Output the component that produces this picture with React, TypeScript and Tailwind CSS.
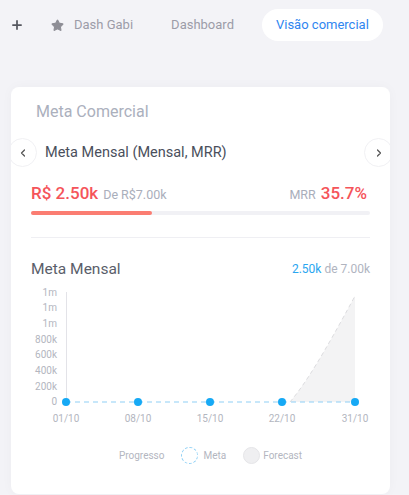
import { Plus, Star, ChevronLeft, ChevronRight } from "lucide-react";

const yLabels = ["1m", "1m", "1m", "800k", "600k", "400k", "200k", "0"];
const points = [
  { x: 35, label: "01/10" },
  { x: 107, label: "08/10" },
  { x: 179, label: "15/10" },
  { x: 251, label: "22/10" },
  { x: 324, label: "31/10" },
];

function Chart() {
  const base = 119;
  return (
    <svg width="339" height="145" viewBox="0 0 339 145" className="block">
      {yLabels.map((l, i) => (
        <text
          key={i}
          x="26"
          y={9 + i * 15.7 + 3.5}
          textAnchor="end"
          fontSize="10"
          fill="#b3b6c0"
          fontFamily="Roboto, sans-serif"
        >
          {l}
        </text>
      ))}
      <line x1="35.5" y1="9" x2="35.5" y2={base} stroke="#e3e3e8" strokeWidth="1" />
      <path
        d={`M259 ${base} C 275 100, 292 72, 324 13 L 324 ${base} Z`}
        fill="#f3f3f4"
      />
      <path
        d={`M259 ${base} C 275 100, 292 72, 324 13`}
        fill="none"
        stroke="#dcdcdf"
        strokeWidth="1"
        strokeDasharray="4 3"
      />
      <line
        x1="35"
        y1={base}
        x2="324"
        y2={base}
        stroke="#8fd0f5"
        strokeWidth="1.2"
        strokeDasharray="5 4"
      />
      {points.map((p) => (
        <g key={p.label}>
          <circle cx={p.x} cy={base} r="4" fill="#16a9f5" />
          <text
            x={p.x}
            y="139"
            textAnchor="middle"
            fontSize="10"
            fill="#b3b6c0"
            fontFamily="Roboto, sans-serif"
          >
            {p.label}
          </text>
        </g>
      ))}
    </svg>
  );
}

export default function App() {
  return (
    <div className="min-h-[495px] w-[409px] bg-[#f3f3f7] font-['Roboto',sans-serif]">
      {/* tabs */}
      <nav className="flex items-center pt-[9px] text-[13px]">
        <Plus className="ml-[10px] h-[14px] w-[14px] text-[#55575f]" strokeWidth={3} />
        <div className="ml-[27px] flex items-center gap-[10px] text-[#9c9ca8]">
          <Star className="h-[13px] w-[13px] fill-[#8e8e96] text-[#8e8e96]" />
          <span>Dash Gabi</span>
        </div>
        <span className="ml-[38px] text-[#9c9ca8]">Dashboard</span>
        <span className="ml-[28px] flex h-8 items-center rounded-full bg-white px-[14px] text-[#2f86f0]">
          Visão comercial
        </span>
      </nav>

      {/* card */}
      <section className="ml-[11px] mt-[46px] w-[379px] overflow-hidden rounded-lg bg-white pb-[30px] shadow-[0_0_12px_rgba(0,0,0,0.03)]">
        <h1 className="pl-[25px] pt-[15px] text-[16px] leading-5 text-[#abb0bd]">Meta Comercial</h1>

        <div className="mt-4 flex items-center justify-between">
          <div className="flex items-center">
            <button className="-ml-[3px] flex h-[29px] w-[29px] items-center justify-center rounded-full border border-[#f0f0f3] bg-white">
              <ChevronLeft className="h-3 w-3 text-[#555]" strokeWidth={2.5} />
            </button>
            <span className="ml-2 text-[14.5px] text-[#4a4f5c]">Meta Mensal (Mensal, MRR)</span>
          </div>
          <button className="-mr-[3px] flex h-[29px] w-[29px] items-center justify-center rounded-full border border-[#f0f0f3] bg-white">
            <ChevronRight className="h-3 w-3 text-[#555]" strokeWidth={2.5} />
          </button>
        </div>

        <div className="px-5">
          <div className="mt-[14px] flex items-baseline justify-between pr-[3px]">
            <div className="flex items-baseline gap-[5px]">
              <span className="text-[17px] font-medium text-[#f5545a]">R$ 2.50k</span>
              <span className="text-[12.5px] text-[#a9aebb]">De R$7.00k</span>
            </div>
            <div className="flex items-baseline gap-[5px]">
              <span className="text-[12.5px] text-[#a9aebb]">MRR</span>
              <span className="text-[17px] font-medium text-[#f5545a]">35.7%</span>
            </div>
          </div>
          <div className="mt-1 h-1 w-full rounded-full bg-[#f1f1f5]">
            <div className="h-1 rounded-full bg-[#fb7d72]" style={{ width: "35.7%" }} />
          </div>

          <div className="mt-[22px] h-px bg-[#efeff3]" />

          <div className="mt-[21px] flex items-center justify-between">
            <span className="text-[15.5px] leading-5 text-[#5a5e6a]">Meta Mensal</span>
            <span className="text-[12px]">
              <span className="text-[#2aa6f0]">2.50k</span>
              <span className="text-[#b0b4bf]"> de 7.00k</span>
            </span>
          </div>

          <div className="mt-[4px]">
            <Chart />
          </div>

          <div className="mt-[19px] flex items-center justify-center pl-[20px] text-[10px] text-[#b3b6c0]">
            <span className="mr-[17px]">Progresso</span>
            <span className="h-[17px] w-[17px] rounded-full border border-dashed border-[#8fd0f5]" />
            <span className="ml-[5px] mr-[17px]">Meta</span>
            <span className="h-[17px] w-[17px] rounded-full border border-[#e5e5e8] bg-[#efeff1]" />
            <span className="ml-[3px]">Forecast</span>
          </div>
        </div>
      </section>
    </div>
  );
}
